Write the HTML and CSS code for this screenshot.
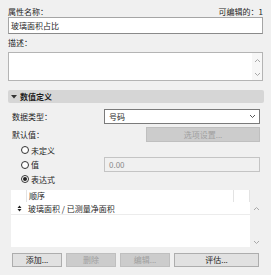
FILE: index.html
```html
<!DOCTYPE html>
<html lang="zh-CN">
<head>
  <meta charset="UTF-8" />
  <title>属性</title>
  <link rel="stylesheet" href="styles.css">
</head>
<body>
  <div class="dialog">
    <div class="head-row">
      <span>属性名称：</span>
      <span>可编辑的：1</span>
    </div>
    <div class="name-box">玻璃面积占比</div>

    <div class="label">描述：</div>
    <div class="desc-box">
      <div class="desc-text"></div>
      <div class="vscroll">
        <svg width="7" height="5" viewBox="0 0 7 5"><path d="M1 4 L3.5 1.5 L6 4" fill="none" stroke="#a8a8a8" stroke-width="1"/></svg>
        <svg width="7" height="5" viewBox="0 0 7 5"><path d="M1 1 L3.5 3.5 L6 1" fill="none" stroke="#a8a8a8" stroke-width="1"/></svg>
      </div>
    </div>

    <!-- 数值定义 -->
    <div class="section-head">
      <svg width="6" height="4" viewBox="0 0 6 4"><path d="M0 0 H6 L3 3.5 Z" fill="#333"/></svg>
      <span>数值定义</span>
    </div>

    <div class="field-row type-row">
      <span class="field-label">数据类型：</span>
      <div class="select">
        <span>号码</span>
        <svg width="7" height="5" viewBox="0 0 7 5"><path d="M1 1 L3.5 3.5 L6 1" fill="none" stroke="#555" stroke-width="1"/></svg>
      </div>
    </div>

    <div class="field-row default-row">
      <span class="field-label">默认值：</span>
      <div class="btn disabled options-btn">选项设置...</div>
    </div>

    <div class="radio-row">
      <span class="radio"></span><span>未定义</span>
    </div>
    <div class="radio-row value-row">
      <div class="radio-part"><span class="radio"></span><span>值</span></div>
      <div class="value-box">0.00</div>
    </div>
    <div class="radio-row last">
      <span class="radio checked"></span><span>表达式</span>
    </div>

    <div class="table-wrap">
      <div class="table">
        <div class="thead">
          <div class="th-lead"></div>
          <div class="th-main">顺序</div>
          <div class="th-end"></div>
        </div>
        <div class="trow">
          <div class="td-lead">
            <svg width="5" height="7" viewBox="0 0 5 7"><path d="M0.5 3 L2.5 0.5 L4.5 3 Z M0.5 4 L2.5 6.5 L4.5 4 Z" fill="#222"/></svg>
          </div>
          <div class="td-main">玻璃面积 / 已测量净面积</div>
        </div>
      </div>
      <div class="vscroll outer">
        <svg width="7" height="5" viewBox="0 0 7 5"><path d="M1 4 L3.5 1.5 L6 4" fill="none" stroke="#a8a8a8" stroke-width="1"/></svg>
        <svg width="7" height="5" viewBox="0 0 7 5"><path d="M1 1 L3.5 3.5 L6 1" fill="none" stroke="#a8a8a8" stroke-width="1"/></svg>
      </div>
    </div>

    <div class="btn-row">
      <div class="btn small">添加...</div>
      <div class="btn small disabled">删除</div>
      <div class="btn small disabled">编辑...</div>
      <div class="btn wide">评估...</div>
    </div>
  </div>
</body>
</html>
```

FILE: styles.css
```css
/* 属性对话框 */
body {
  margin: 0;
  background: #f0f0f0;
  font-family: "Noto Sans CJK SC", "Noto Sans", sans-serif;
  font-size: 8px;
  color: #1e1e1e;
}
.dialog {
  padding: 7px 0 0 8px;
  width: 256px;
}
.head-row {
  display: flex;
  justify-content: space-between;
  width: 255px;
  height: 10px;
  line-height: 10px;
}
.name-box {
  box-sizing: border-box;
  width: 255px;
  height: 17px;
  line-height: 15px;
  padding-left: 2px;
  background: #fff;
  border: 1px solid #a5a5a5;
  border-bottom-color: #8a8a8a;
}
.label {
  margin-top: 4px;
  height: 10px;
  line-height: 10px;
}
.desc-box {
  box-sizing: border-box;
  display: flex;
  margin-top: 4px;
  width: 255px;
  height: 29px;
  background: #fff;
  border: 1px solid #b4b4b4;
}
.desc-text {
  flex: 1;
}
.vscroll {
  display: flex;
  flex-direction: column;
  justify-content: space-between;
  align-items: center;
  width: 10px;
  padding: 5px 0 3px;
  background: #f7f7f7;
}
.section-head {
  display: flex;
  align-items: center;
  gap: 3px;
  margin-top: 9px;
  width: 256px;
  height: 13px;
  padding-left: 3px;
  box-sizing: border-box;
  background: #d6d6d6;
  border-radius: 2px;
  font-weight: bold;
}
.field-row {
  display: flex;
  align-items: center;
}
.field-label {
  box-sizing: border-box;
  width: 96px;
  padding-left: 4px;
}
.type-row {
  margin-top: 6px;
}
.select {
  box-sizing: border-box;
  display: flex;
  align-items: center;
  justify-content: space-between;
  width: 156px;
  height: 15px;
  padding: 0 3px 0 4px;
  background: #fff;
  border: 1px solid #7a7a7a;
}
.default-row {
  margin-top: 3px;
}
.btn {
  box-sizing: border-box;
  height: 15px;
  line-height: 13px;
  text-align: center;
  background: #e1e1e1;
  border: 1px solid #adadad;
}
.btn.disabled {
  background: #cccccc;
  border-color: #bfbfbf;
  color: #a0a0a0;
}
.options-btn {
  margin-left: 42px;
  width: 114px;
}
.radio-row {
  display: flex;
  align-items: center;
  gap: 2px;
  height: 10px;
  padding-left: 13px;
  margin-top: 3px;
}
.radio-row.last {
  margin-top: 2px;
}
.radio {
  box-sizing: border-box;
  width: 8px;
  height: 8px;
  border: 1px solid #333;
  border-radius: 50%;
  background: #fff;
  position: relative;
}
.radio.checked::after {
  content: "";
  position: absolute;
  left: 1px;
  top: 1px;
  width: 4px;
  height: 4px;
  border-radius: 50%;
  background: #222;
}
.value-row {
  height: 15px;
  margin-top: 2px;
  gap: 0;
}
.radio-part {
  display: flex;
  align-items: center;
  gap: 2px;
  width: 83px;
}
.value-box {
  box-sizing: border-box;
  width: 156px;
  height: 15px;
  line-height: 13px;
  padding-left: 4px;
  background: #f0f0f0;
  border: 1px solid #c4c4c4;
  color: #8a8a8a;
}
.table-wrap {
  display: flex;
  margin: 6px 0 0 3px;
  height: 57px;
}
.table {
  width: 239px;
  background: #fff;
}
.thead {
  display: flex;
  height: 12px;
  line-height: 12px;
}
.th-lead {
  width: 15px;
  border-right: 1px solid #e3e3e3;
}
.th-main {
  flex: 1;
  padding-left: 2px;
  border-right: 1px solid #e3e3e3;
}
.th-end {
  width: 15px;
  border-right: 1px solid #e3e3e3;
}
.trow {
  display: flex;
  align-items: center;
  height: 12px;
  border-bottom: 1px solid #ececec;
}
.td-lead {
  display: flex;
  justify-content: center;
  width: 14px;
  padding-left: 2px;
  box-sizing: border-box;
}
.td-main {
  padding-left: 3px;
}
.vscroll.outer {
  width: 12px;
  padding: 16px 0 2px;
  background: #f0f0f0;
}
.btn-row {
  display: flex;
  gap: 4px;
  margin: 6px 0 0 4px;
}
.btn.small {
  width: 50px;
  height: 14px;
  line-height: 12px;
}
.btn.wide {
  width: 85px;
  height: 14px;
  line-height: 12px;
}
```
